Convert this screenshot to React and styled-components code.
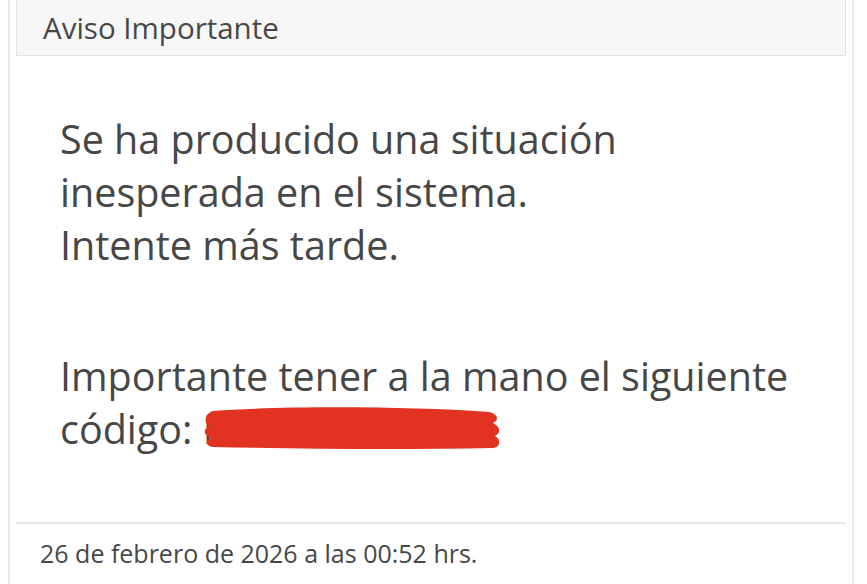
import React from "react";
import styled, { createGlobalStyle } from "styled-components";

const Global = createGlobalStyle`
  html, body { margin: 0; padding: 0; background: #fff; }
  body { font-family: "Open Sans", "Noto Sans", sans-serif; color: #474747; }
`;

function App() {
  return (
    <>
      <Global />
      <Card>
        <Header>Aviso Importante</Header>
        <Body>
          <Paragraph>
            Se ha producido una situación
            <br />
            inesperada en el sistema.
            <br />
            Intente más tarde.
          </Paragraph>
          <Paragraph>
            Importante tener a la mano el siguiente
            <br />
            código: <Code>E000000000000<Scribble /></Code>
          </Paragraph>
        </Body>
        <Footer>26 de febrero de 2026 a las 00:52 hrs.</Footer>
      </Card>
    </>
  );
}

function Scribble() {
  return (
    <Mark viewBox="0 0 300 46" preserveAspectRatio="none">
      <path
        d="M12 6 C80 1 200 1 284 7 C294 9 294 16 288 18 C296 22 296 28 290 31 C296 34 296 42 288 43 C200 45 100 44 12 42 C4 41 4 35 10 33 C2 30 2 24 8 21 C2 18 4 8 12 6 Z"
        fill="#e23222"
      />
    </Mark>
  );
}

const Card = styled.div`
  box-sizing: border-box;
  margin-left: 8px;
  width: 846px;
  height: 584px;
  border-left: 2px solid #ebebeb;
  border-right: 2px solid #ebebeb;
  padding: 0 6px;
  display: flex;
  flex-direction: column;
`;

const Header = styled.div`
  flex-shrink: 0;
  box-sizing: border-box;
  height: 56px;
  padding: 10px 0 0 26px;
  background: #f7f7f7;
  border: 1px solid #e2e2e2;
  border-top: none;
  font-size: 29.5px;
  line-height: 36px;
`;

const Body = styled.div`
  flex-shrink: 0;
  box-sizing: border-box;
  height: 466px;
  padding: 57px 0 0 44px;
`;

const Paragraph = styled.p`
  margin: 0 0 78px;
  font-size: 39.5px;
  line-height: 53px;
  &:last-child { margin-bottom: 0; }
`;

const Code = styled.span`
  position: relative;
  display: inline-block;
`;

const Mark = styled.svg`
  position: absolute;
  left: -2px;
  top: 2px;
  width: 304px;
  height: 46px;
`;

const Footer = styled.div`
  flex: 1;
  box-sizing: border-box;
  border-top: 2px solid #e6e6e6;
  padding: 12px 0 0 24px;
  font-size: 25px;
  line-height: 34px;
`;

export default App;
